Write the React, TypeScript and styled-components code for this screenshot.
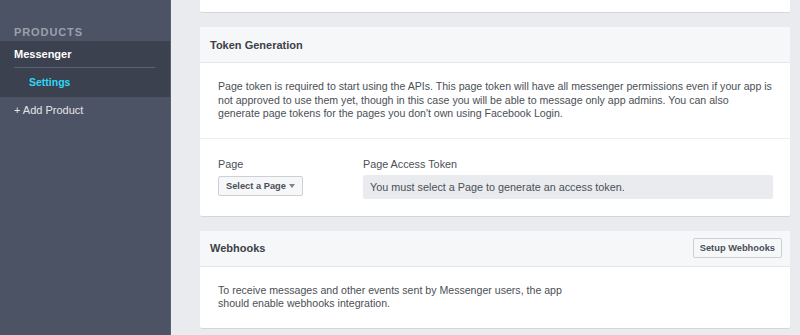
import React from 'react';
import styled, { createGlobalStyle } from 'styled-components';

const GlobalStyle = createGlobalStyle`
  html, body {
    margin: 0;
    padding: 0;
    height: 100%;
    overflow: hidden;
  }
  body {
    font-family: "Liberation Sans", Arial, Helvetica, sans-serif;
    background-color: #e9ebee;
    color: #4b4f56;
  }
`;

const Layout = styled.div`
  display: flex;
  height: 335px;
  width: 800px;
`;

const Sidebar = styled.aside`
  width: 171px;
  flex-shrink: 0;
  background-color: #4c5364;
  padding-top: 26px;
  box-sizing: border-box;
  border-right: 1px solid #5a6172;
`;

const SectionTitle = styled.div`
  padding: 0 14px;
  height: 15px;
  line-height: 12px;
  font-size: 11px;
  font-weight: 700;
  letter-spacing: 0.9px;
  color: #9aa0ab;
`;

const ProductGroup = styled.div`
  background-color: #3b414e;
  padding: 0 14px;
  height: 56px;
  display: flex;
  flex-direction: column;
`;

const ProductName = styled.div`
  height: 26px;
  line-height: 26px;
  font-size: 11px;
  font-weight: 700;
  color: #ffffff;
  border-bottom: 1px solid #5b6272;
  margin-right: 1px;
`;

const SubLink = styled.a<{ $active?: boolean }>`
  display: block;
  padding-left: 15px;
  height: 29px;
  line-height: 29px;
  font-size: 10.5px;
  font-weight: 700;
  color: ${p => (p.$active ? '#2fd8f7' : '#c9ccd3')};
  text-decoration: none;
`;

const AddProduct = styled.a`
  display: block;
  padding: 0 14px;
  height: 27px;
  line-height: 27px;
  font-size: 11px;
  color: #e3e5e9;
  text-decoration: none;
`;

const Main = styled.main`
  flex: 1;
  padding: 0 10px 0 29px;
  display: flex;
  flex-direction: column;
  gap: 14px;
`;

const Card = styled.section<{ $height?: number }>`
  background-color: #ffffff;
  border-bottom: 1px solid #d3d6db;
  border-radius: 0 0 2px 2px;
  ${p => (p.$height ? `height: ${p.$height}px;` : '')}
  box-sizing: border-box;
`;

const CardHeader = styled.header`
  height: 36px;
  padding: 0 8px 0 10px;
  background-color: #f6f7f9;
  border-bottom: 1px solid #e5e6e9;
  display: flex;
  align-items: center;
  justify-content: space-between;
  box-sizing: border-box;
`;

const CardTitle = styled.h2`
  margin: 0;
  font-size: 11px;
  font-weight: 700;
  color: #3d4148;
`;

const CardBody = styled.div`
  padding: 17px 18px 17px 18px;
`;

const Paragraph = styled.p<{ $max?: number }>`
  margin: 0;
  font-size: 10.6px;
  line-height: 13.5px;
  color: #4b4f56;
  ${p => (p.$max ? `max-width: ${p.$max}px;` : '')}
`;

const FormRow = styled.div`
  display: flex;
  gap: 61px;
  padding: 19px 17px 17px 18px;
  border-top: 1px solid #eceef1;
`;

const Field = styled.div<{ $grow?: boolean }>`
  display: flex;
  flex-direction: column;
  gap: 4px;
  ${p => (p.$grow ? 'flex: 1;' : 'width: 84px;')}
`;

const Label = styled.label`
  font-size: 10.8px;
  line-height: 13px;
  color: #4b4f56;
`;

const Button = styled.button`
  font-family: "Liberation Sans", Arial, Helvetica, sans-serif;
  height: 20px;
  padding: 0 6px;
  background-color: #f6f7f9;
  border: 1px solid #ced0d4;
  border-radius: 2px;
  font-size: 9.3px;
  font-weight: 700;
  color: #4b4f56;
  display: inline-flex;
  align-items: center;
  gap: 3px;
  white-space: nowrap;
  box-sizing: border-box;
  cursor: pointer;
`;

const SelectButton = styled(Button)`
  align-self: flex-start;
  margin-top: 1px;
  padding: 0 7px;
`;

const Caret = styled.span`
  width: 0;
  height: 0;
  border-left: 3px solid transparent;
  border-right: 3px solid transparent;
  border-top: 4px solid #7f838a;
  margin-top: 1px;
`;

const TokenBox = styled.div`
  height: 24px;
  background-color: #e9ebee;
  border-radius: 2px;
  padding: 0 7px;
  display: flex;
  align-items: center;
  font-size: 10.8px;
  color: #4b4f56;
`;

export default function App() {
  return (
    <>
      <GlobalStyle />
      <Layout>
        <Sidebar>
          <SectionTitle>PRODUCTS</SectionTitle>
          <ProductGroup>
            <ProductName>Messenger</ProductName>
            <SubLink $active href="#">Settings</SubLink>
          </ProductGroup>
          <AddProduct href="#">+ Add Product</AddProduct>
        </Sidebar>
        <Main>
          <Card $height={13} />
          <Card>
            <CardHeader>
              <CardTitle>Token Generation</CardTitle>
            </CardHeader>
            <CardBody>
              <Paragraph>
                Page token is required to start using the APIs. This page token will have all messenger
                permissions even if your app is not approved to use them yet, though in this case you will be
                able to message only app admins. You can also generate page tokens for the pages you don't own
                using Facebook Login.
              </Paragraph>
            </CardBody>
            <FormRow>
              <Field>
                <Label>Page</Label>
                <SelectButton>
                  Select a Page <Caret />
                </SelectButton>
              </Field>
              <Field $grow>
                <Label>Page Access Token</Label>
                <TokenBox>You must select a Page to generate an access token.</TokenBox>
              </Field>
            </FormRow>
          </Card>
          <Card>
            <CardHeader>
              <CardTitle>Webhooks</CardTitle>
              <Button>Setup Webhooks</Button>
            </CardHeader>
            <CardBody>
              <Paragraph $max={350}>
                To receive messages and other events sent by Messenger users, the app should enable webhooks
                integration.
              </Paragraph>
            </CardBody>
          </Card>
        </Main>
      </Layout>
    </>
  );
}
